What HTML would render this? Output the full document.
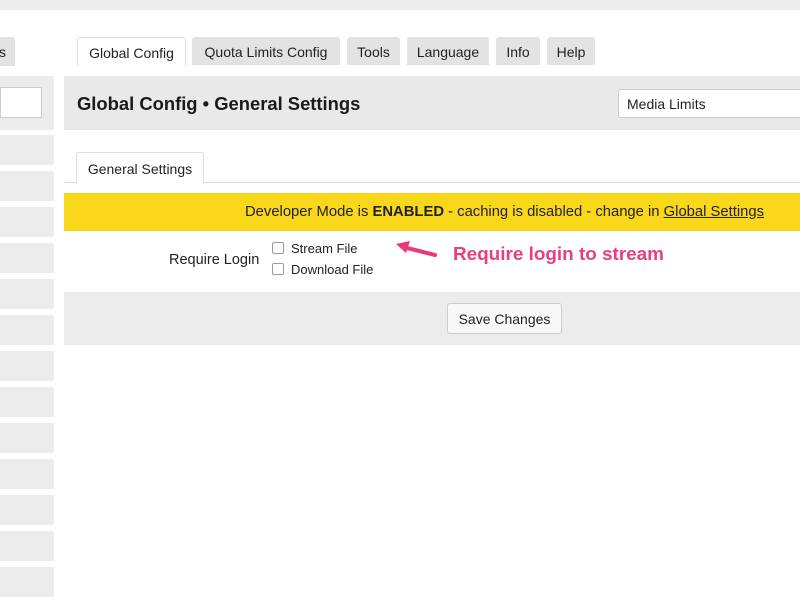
<!DOCTYPE html>
<html><head><style>
body{margin:0;width:800px;height:586px;overflow:hidden;background:#fff;font-family:"Liberation Sans",sans-serif;position:relative;color:#222}
.a{position:absolute}
.tab{position:absolute;top:37px;height:28px;background:#e3e3e3;border-radius:3px 3px 0 0;font-size:14px;line-height:30px;text-align:center;color:#222}
.sb{position:absolute;left:0;width:54px;height:30px;background:#ececec}
</style></head><body>
<div class="a" style="left:0;top:0;width:800px;height:10px;background:#ececec"></div>
<div class="tab" style="left:-10px;width:25px;">s</div>
<div class="a" style="left:0;top:65px;width:15px;height:1px;background:#ddd"></div>
<div class="tab" style="left:77px;width:107px;background:#fff;border:1px solid #ddd;border-bottom:none">Global Config</div>
<div class="tab" style="left:192px;width:148px">Quota Limits Config</div>
<div class="tab" style="left:347px;width:53px">Tools</div>
<div class="tab" style="left:407px;width:82px">Language</div>
<div class="tab" style="left:496px;width:44px">Info</div>
<div class="tab" style="left:547px;width:48px">Help</div>
<div class="a" style="left:0;top:76px;width:54px;height:54px;background:#ececec"></div>
<div class="a" style="left:0;top:87px;width:40px;height:29px;background:#fff;border:1px solid #ccc"></div>
<div class="sb" style="top:135px"></div><div class="sb" style="top:171px"></div><div class="sb" style="top:207px"></div><div class="sb" style="top:243px"></div><div class="sb" style="top:279px"></div><div class="sb" style="top:315px"></div><div class="sb" style="top:351px"></div><div class="sb" style="top:387px"></div><div class="sb" style="top:423px"></div><div class="sb" style="top:459px"></div><div class="sb" style="top:495px"></div><div class="sb" style="top:531px"></div><div class="sb" style="top:567px"></div>
<div class="a" style="left:64px;top:76px;width:736px;height:54px;background:#e9e9e9"></div>
<div class="a" style="left:77px;top:93px;font-size:18.4px;font-weight:bold;color:#1a1a1a">Global Config • General Settings</div>
<div class="a" style="left:618px;top:89px;width:190px;height:29px;background:#fff;border:1px solid #ccc;border-radius:3px;font-size:14px;line-height:29px;padding-left:8px;box-sizing:border-box">Media Limits</div>
<div class="a" style="left:64px;top:182px;width:736px;height:1px;background:#ddd"></div>
<div class="a" style="left:76px;top:152px;width:126px;height:31px;background:#fff;border:1px solid #ddd;border-bottom:none;border-radius:3px 3px 0 0;font-size:14px;line-height:32px;text-align:center">General Settings</div>
<div class="a" style="left:64px;top:193px;width:736px;height:38px;background:#f9d81b"></div>
<div class="a" style="left:245px;top:204px;font-size:14.8px;color:#222">Developer Mode is <b>ENABLED</b> - caching is disabled - change in <u>Global Settings</u></div>
<div class="a" style="left:169px;top:252px;font-size:14.5px">Require Login</div>
<div class="a" style="left:272px;top:242px;width:10px;height:10px;border:1px solid #999;border-radius:2px"></div>
<div class="a" style="left:272px;top:263px;width:10px;height:10px;border:1px solid #999;border-radius:2px"></div>
<div class="a" style="left:291px;top:241px;font-size:13px">Stream File</div>
<div class="a" style="left:291px;top:262px;font-size:13px">Download File</div>
<svg class="a" style="left:393px;top:238px" width="46" height="24"><path d="M42 17 L10 9" stroke="#e83a7a" stroke-width="4" stroke-linecap="round"/><path d="M3 6 L17 3 L13 15 Z" fill="#e83a7a"/></svg>
<div class="a" style="left:453px;top:244px;font-size:18.9px;font-weight:bold;color:#e8407f">Require login to stream</div>
<div class="a" style="left:64px;top:292px;width:736px;height:53px;background:#ececec"></div>
<div class="a" style="left:447px;top:303px;width:115px;height:31px;background:#f8f8f8;border:1px solid #ccc;border-radius:3px;box-sizing:border-box;font-size:14px;line-height:30px;text-align:center">Save Changes</div>
</body></html>
